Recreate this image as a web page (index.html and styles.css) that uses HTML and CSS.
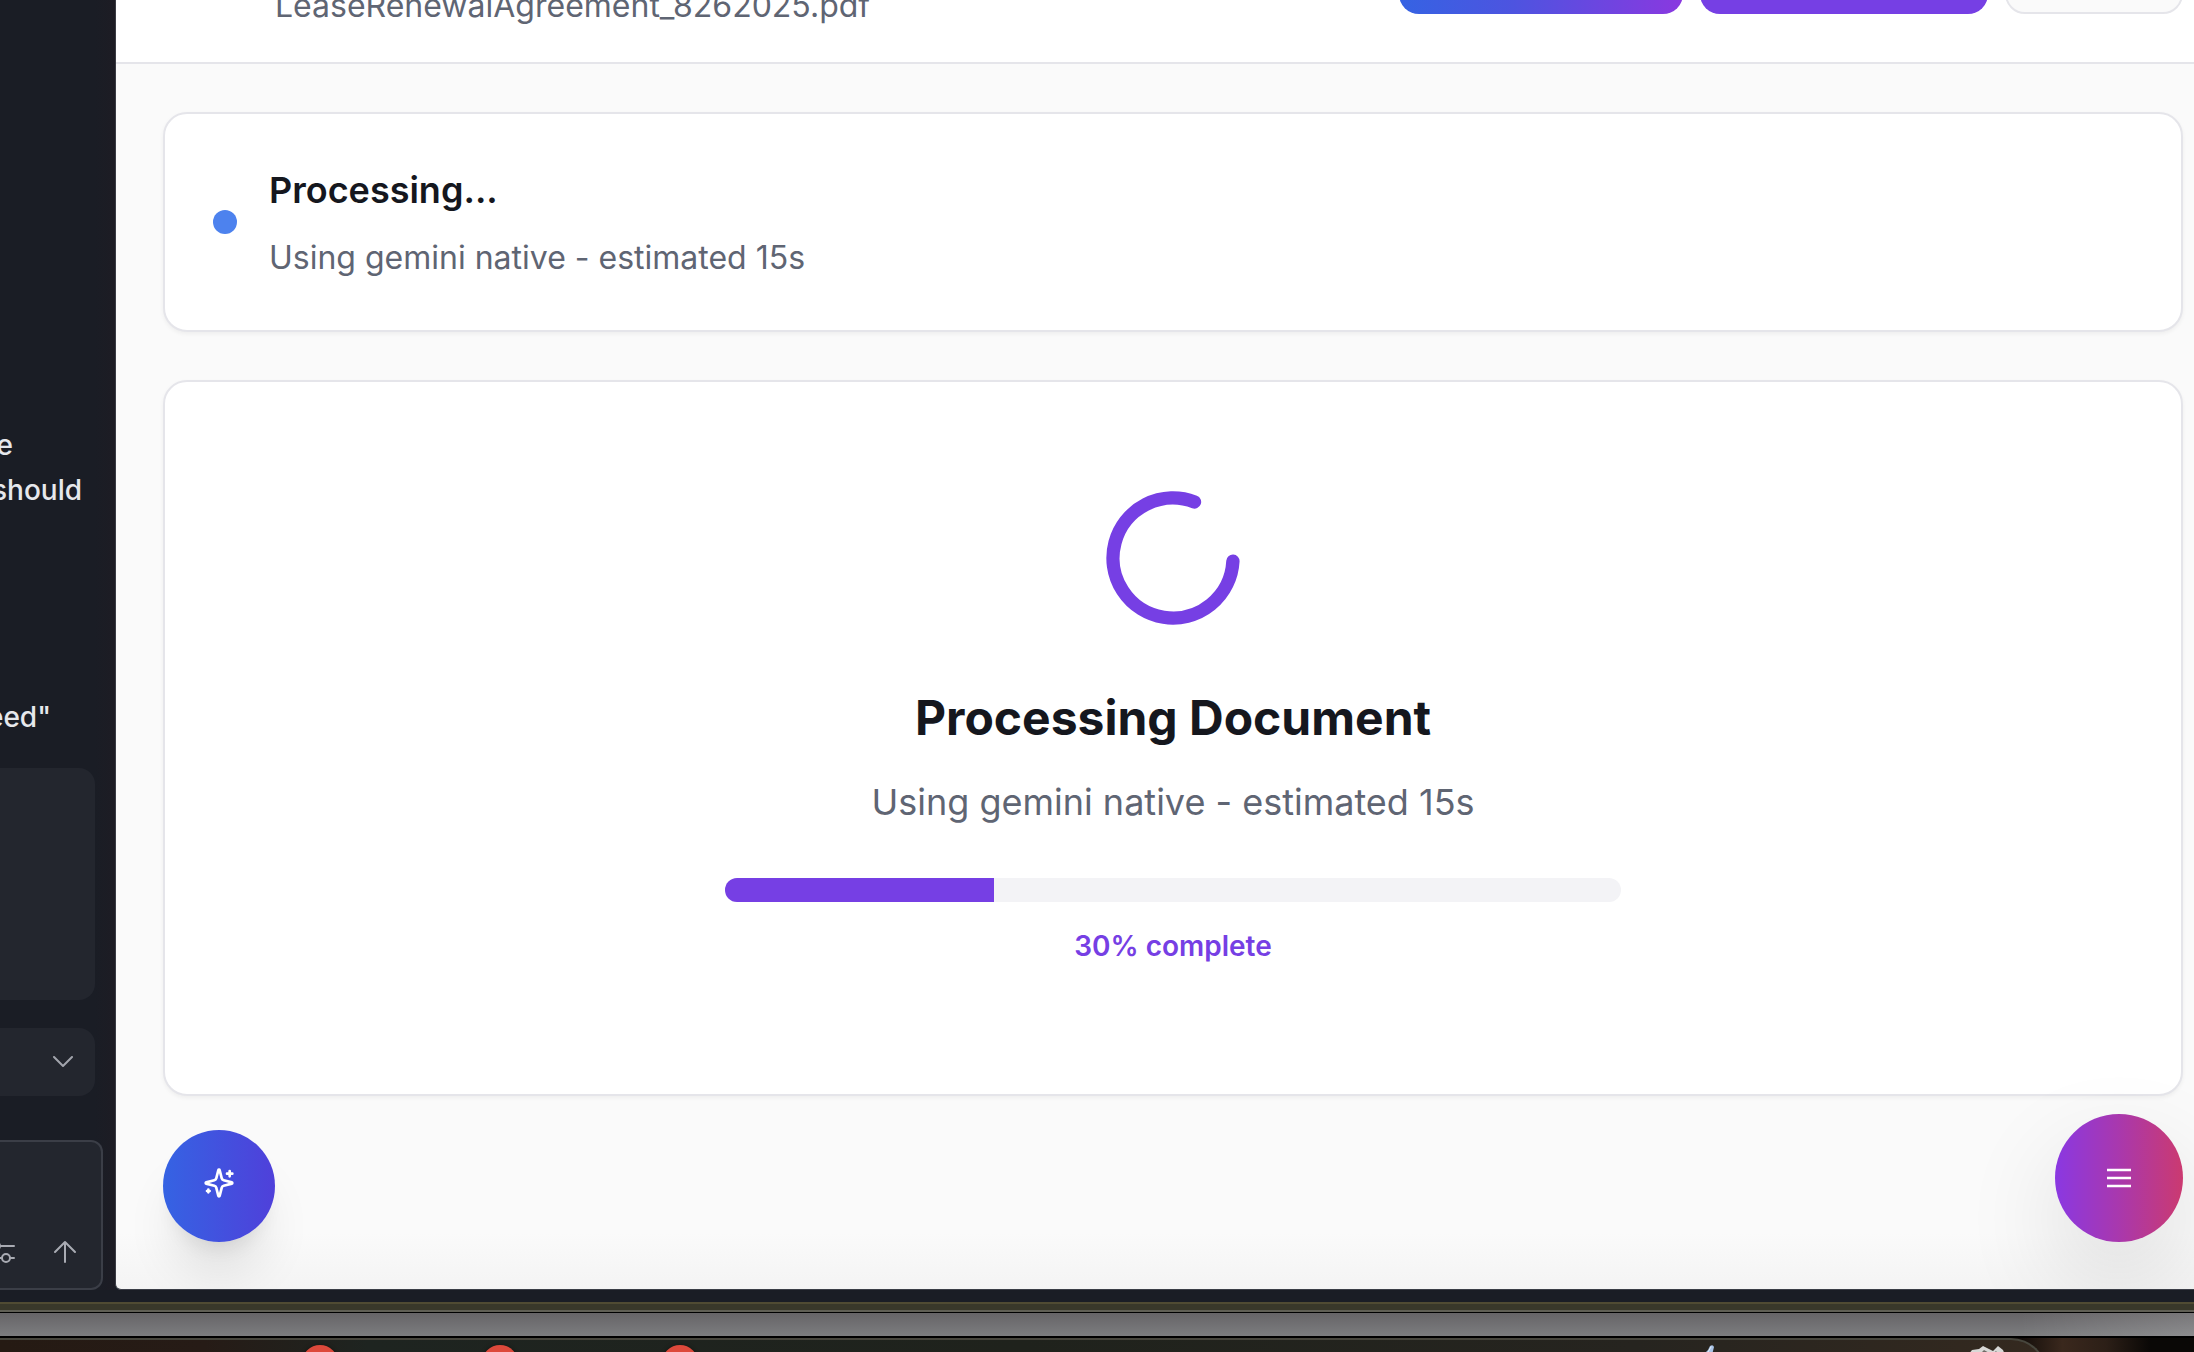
FILE: index.html
```html
<!DOCTYPE html>
<html lang="en">
<head>
<meta charset="utf-8">
<title>Processing Document</title>
<link rel="stylesheet" href="styles.css">
</head>
<body>
<div class="window">
  <aside class="sidebar">
    <p class="line line-short">e</p>
    <p class="line line-long">should</p>
    <p class="line line-medium line-last">eed"</p>
    <div class="panel panel-tall"></div>
    <button class="panel panel-toggle" type="button" aria-label="Expand">
      <svg width="20" height="12" viewBox="0 0 20 12"><path d="M1 1l9 9 9-9"/></svg>
    </button>
    <div class="composer">
      <button type="button" class="tool" aria-label="Settings">
        <svg width="32" height="24" viewBox="0 0 32 24"><path d="M1 6h8M18 6h13M1 18h17M27 18h4"/><circle cx="13" cy="6" r="4"/><circle cx="23" cy="18" r="4"/></svg>
      </button>
      <button type="button" class="tool" aria-label="Send">
        <svg width="24" height="24" viewBox="0 0 24 24"><path d="M12 22V2M2 12L12 2l10 10"/></svg>
      </button>
    </div>
  </aside>
  <main class="main">
    <header class="header">
      <p class="filename">LeaseRenewalAgreement_8262025.pdf</p>
      <div class="actions">
        <button type="button" class="action action-gradient" aria-label="Analyze"></button>
        <button type="button" class="action action-solid" aria-label="Process"></button>
        <button type="button" class="action action-outline" aria-label="More"></button>
      </div>
    </header>
    <div class="content">
      <section class="card status">
        <span class="dot"></span>
        <div>
          <h3 class="status-title">Processing...</h3>
          <p class="status-text">Using gemini native - estimated 15s</p>
        </div>
      </section>
      <section class="card document">
        <svg class="spinner" viewBox="0 0 24 24"><path d="M21 12a9 9 0 1 1-6.219-8.56" transform="rotate(3 12 12)"/></svg>
        <h2 class="document-title">Processing Document</h2>
        <p class="document-text">Using gemini native - estimated 15s</p>
        <div class="bar" role="progressbar" aria-valuenow="30" aria-valuemin="0" aria-valuemax="100" aria-label="Progress"><div class="bar-fill" style="width:30%"></div></div>
        <p class="percent">30% complete</p>
      </section>
      <div class="fabs">
        <button type="button" class="fab fab-sparkles" aria-label="Assistant">
          <svg viewBox="0 0 24 24"><path d="M9.937 15.5A2 2 0 0 0 8.5 14.063l-6.135-1.582a.5.5 0 0 1 0-.962L8.5 9.936A2 2 0 0 0 9.937 8.5l1.582-6.135a.5.5 0 0 1 .963 0L14.063 8.5A2 2 0 0 0 15.5 9.937l6.135 1.581a.5.5 0 0 1 0 .964L15.5 14.063a2 2 0 0 0-1.437 1.437l-1.582 6.135a.5.5 0 0 1-.963 0zM20 3v4M22 5h-4M4 17v2M5 18H3"/></svg>
        </button>
        <button type="button" class="fab fab-menu" aria-label="Menu">
          <svg viewBox="0 0 24 24"><path d="M3 6h18M3 12h18M3 18h18"/></svg>
        </button>
      </div>
    </div>
  </main>
</div>
<div class="window-edge"></div>
<div class="wallpaper"></div>
<footer class="desktop">
  <div class="dock">
    <span class="badge"></span>
    <span class="badge"></span>
    <span class="badge"></span>
    <svg class="dock-pen" width="16" height="10" viewBox="0 0 16 10"><path d="M1 10L6 5L8 1Q11-1 12 2L10 10Z" fill="#a9c3e6"/><path d="M9 2L6 7" stroke="#e8f0fa" stroke-width="1"/></svg>
    <svg class="dock-paper" width="40" height="10" viewBox="0 0 40 10"><path d="M0 10L4 5l7-1 4-3 6 3 4 2 5-5 5 4 2 5z" fill="#d8d8d6"/><path d="M12 9l4-4 7 4zM24 10l4-4 3 4z" fill="#6e6b66"/></svg>
  </div>
</footer>
</body>
</html>
```
FILE: styles.css
```css
* { box-sizing: border-box; }
body {
  margin: 0;
  height: 100vh;
  display: flex;
  flex-direction: column;
  overflow: hidden;
  background: #000;
  font-family: Inter, "Liberation Sans", sans-serif;
}
h2, h3, p { margin: 0; }
button { margin: 0; padding: 0; border: 0; background: none; }
svg { display: block; fill: none; stroke-linecap: round; stroke-linejoin: round; }

.window {
  flex: 1;
  min-height: 0;
  display: grid;
  grid-template-columns: 115px 1fr;
  padding-bottom: 12px;
  background: #1a1d25;
}

/* Sidebar */
.sidebar {
  display: flex;
  flex-direction: column;
  justify-content: flex-end;
  overflow: hidden;
  background: linear-gradient(90deg, #1a1d25 95px, #1d1c24);
}
.line {
  display: flex;
  justify-content: flex-end;
  color: #e6e8ec;
  font-size: 28px;
  font-weight: 500;
  line-height: 45px;
  white-space: nowrap;
}
.line-short { padding-right: 102px; }
.line-long { padding-right: 33px; }
.line-medium { padding-right: 64px; }
.line-last { margin: 182px 0 28px; }
.panel {
  margin-right: 20px;
  border-radius: 0 16px 16px 0;
  background: #23262e;
}
.panel-tall { height: 232px; margin-bottom: 28px; }
.panel-toggle {
  display: flex;
  align-items: center;
  justify-content: flex-end;
  height: 68px;
  margin-bottom: 44px;
  padding-right: 22px;
}
.panel-toggle svg { stroke: #a2a4ac; stroke-width: 2; }
.composer {
  display: flex;
  align-items: flex-end;
  justify-content: flex-end;
  gap: 38px;
  height: 150px;
  margin-right: 12px;
  padding: 0 24px 24px 0;
  border: 2px solid #3b3e47;
  border-left: 0;
  border-radius: 0 12px 12px 0;
  background: #23262e;
}
.tool { flex: none; }
.tool svg { stroke: #a9abb3; stroke-width: 2; }

/* Main panel */
.main {
  display: flex;
  flex-direction: column;
  min-width: 0;
  overflow: hidden;
  border-left: 1px solid #3b3c44;
  border-bottom: 1px solid #3b3e47;
  border-bottom-left-radius: 6px;
  background: #fafafa linear-gradient(#fafafa, #f4f4f4) bottom / 100% 56px no-repeat;
}
.header {
  display: flex;
  align-items: flex-end;
  justify-content: space-between;
  flex: none;
  height: 64px;
  padding: 0 11px 32px 159px;
  border-bottom: 2px solid #e5e5ea;
  background: #fff;
}
.filename {
  color: #5f6573;
  font-size: 32px;
  line-height: 48px;
}
.actions {
  display: flex;
  gap: 17px;
  padding-bottom: 16px;
}
.action { width: 284px; height: 80px; border-radius: 20px; }
.action-gradient { background: linear-gradient(90deg, #3563e3, #4d54e0 40%, #8a38e0); }
.action-solid { width: 288px; background: #763fe4; }
.action-outline { width: 178px; border: 2px solid #e5e5ea; background: #fafafa; }

.content { padding: 48px 11px 0 47px; }
.card {
  border: 2px solid #e5e5ea;
  border-radius: 24px;
  background: #fff;
  box-shadow: 0 2px 4px rgba(0, 0, 0, .05);
}
.status {
  display: flex;
  align-items: center;
  gap: 32px;
  margin-bottom: 48px;
  padding: 48px;
}
.dot {
  width: 24px;
  height: 24px;
  border-radius: 50%;
  background: #4d82ee;
}
.status-title {
  margin-bottom: 16px;
  color: #15171e;
  font-size: 36px;
  font-weight: 600;
  line-height: 56px;
}
.status-text {
  color: #5f6573;
  font-size: 32px;
  line-height: 48px;
}
.document {
  display: flex;
  flex-direction: column;
  align-items: center;
  padding: 96px 96px 128px;
}
.spinner {
  width: 160px;
  height: 160px;
  margin-bottom: 48px;
  stroke: #763fe4;
  stroke-width: 2;
}
.document-title {
  margin-bottom: 24px;
  color: #15171e;
  font-size: 48px;
  font-weight: 700;
  line-height: 64px;
}
.document-text {
  margin-bottom: 48px;
  color: #5f6573;
  font-size: 36px;
  line-height: 56px;
}
.bar {
  width: 100%;
  max-width: 896px;
  height: 24px;
  overflow: hidden;
  border-radius: 12px;
  background: #f3f3f6;
}
.bar-fill { height: 100%; background: #763fe4; }
.percent {
  margin-top: 24px;
  color: #763fe4;
  font-size: 28px;
  font-weight: 600;
  line-height: 40px;
}

.fabs {
  display: flex;
  align-items: flex-end;
  justify-content: space-between;
  margin-top: 18px;
}
.fab {
  display: flex;
  align-items: center;
  justify-content: center;
  border-radius: 50%;
}
.fab svg { width: 32px; height: 32px; stroke: #fff; stroke-width: 2; }
.fab-sparkles {
  width: 112px;
  height: 112px;
  padding-bottom: 6px;
  background: linear-gradient(90deg, #3563e3, #4f40da);
  box-shadow: 0 40px 50px -10px rgba(0, 0, 0, .1), 0 16px 20px -12px rgba(0, 0, 0, .1);
}
.fab-menu {
  width: 128px;
  height: 128px;
  background: linear-gradient(90deg, #8a38e2, #a938ad 50%, #cb3a70);
  box-shadow: 0 40px 100px rgba(0, 0, 0, .12);
}
.fab-menu svg { stroke-linecap: butt; }

/* Desktop behind the window */
.window-edge {
  flex: none;
  height: 10px;
  border-top: 2px solid #504b33;
  border-bottom: 2px solid #605f55;
  background: #39382a;
}
.wallpaper {
  flex: none;
  height: 26px;
  border-top: 1px solid #000;
  border-bottom: 2px solid #000;
  background: linear-gradient(90deg, rgba(255, 255, 255, 0) 92%, rgba(255, 255, 255, .12)), linear-gradient(#666467, #7c7d7f);
}
.desktop {
  flex: none;
  height: 14px;
  overflow: hidden;
  background: linear-gradient(90deg, #120d0a 92%, #3a281d 94%, #2c1f17 96%, #0a0806 98%);
}
.dock {
  display: flex;
  align-items: flex-start;
  height: 60px;
  margin-right: 147px;
  padding: 5px 37px 0 302px;
  border-top: 2px solid #47463d;
  border-right: 2px solid #47463d;
  border-top-right-radius: 36px;
  background: linear-gradient(90deg, #251a13, #261b16 10%, #1e2420 18%, #1f221c 50%, #26241f 80%, #34291f);
}
.badge {
  flex: none;
  width: 36px;
  height: 36px;
  margin-right: 144px;
  border-radius: 50%;
  background: #dd493b;
  box-shadow: 0 0 4px rgba(0, 0, 0, .4);
}
.dock-pen { margin-left: auto; }
.dock-paper { margin-left: 250px; }
```
